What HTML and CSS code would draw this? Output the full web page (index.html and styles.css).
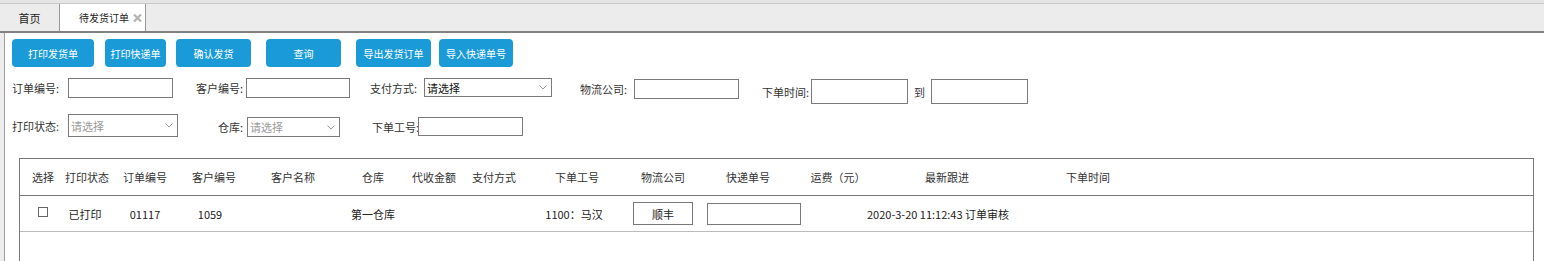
FILE: index.html
```html
<!DOCTYPE html>
<html lang="zh-CN">
<head>
    <meta charset="UTF-8">
    <meta name="viewport" content="width=device-width, initial-scale=1.0">
    <title>待发货订单</title>
    <link rel="stylesheet" href="styles.css">
</head>
<body>
    <div class="top-strip"></div>
    <div class="tabs">
        <div class="tab">首页</div>
        <div class="tab active">
            待发货订单
            <svg class="tab-close" width="9" height="8" viewBox="0 0 9 8">
                <path d="M1 0.5 L8 7.5 M8 0.5 L1 7.5" stroke="#b4b4b4" stroke-width="2.2" fill="none"/>
            </svg>
        </div>
    </div>

    <div class="main">
        <div class="toolbar">
            <button class="btn btn-wide">打印发货单</button>
            <button class="btn btn-narrow">打印快递单</button>
            <button class="btn">确认发货</button>
            <button class="btn">查询</button>
            <button class="btn btn-export">导出发货订单</button>
            <button class="btn btn-import">导入快递单号</button>
        </div>

        <div class="filter-row row-one">
            <div class="field f-order">
                <label class="label">订单编号:</label>
                <input class="input">
            </div>
            <div class="field f-customer">
                <label class="label">客户编号:</label>
                <input class="input">
            </div>
            <div class="field f-pay">
                <label class="label">支付方式:</label>
                <div class="select">
                    <span>请选择</span>
                    <svg width="8" height="5" viewBox="0 0 8 5"><path d="M0.5 0.5 L4 4 L7.5 0.5" stroke="#9a9a9a" fill="none"/></svg>
                </div>
            </div>
            <div class="field f-logistics">
                <label class="label">物流公司:</label>
                <input class="input">
            </div>
            <div class="field f-time">
                <label class="label">下单时间:</label>
                <input class="input input-date">
                <label class="label label-to">到</label>
                <input class="input input-date">
            </div>
        </div>

        <div class="filter-row row-two">
            <div class="field f-print">
                <label class="label">打印状态:</label>
                <div class="select muted">
                    <span>请选择</span>
                    <svg width="8" height="5" viewBox="0 0 8 5"><path d="M0.5 0.5 L4 4 L7.5 0.5" stroke="#9a9a9a" fill="none"/></svg>
                </div>
            </div>
            <div class="field f-store">
                <label class="label">仓库:</label>
                <div class="select muted">
                    <span>请选择</span>
                    <svg width="8" height="5" viewBox="0 0 8 5"><path d="M0.5 0.5 L4 4 L7.5 0.5" stroke="#9a9a9a" fill="none"/></svg>
                </div>
            </div>
            <div class="field f-staff">
                <label class="label">下单工号:</label>
                <input class="input">
            </div>
        </div>

        <div class="grid">
            <div class="grid-row grid-head">
                <div class="cell">选择</div>
                <div class="cell">打印状态</div>
                <div class="cell">订单编号</div>
                <div class="cell">客户编号</div>
                <div class="cell">客户名称</div>
                <div class="cell">仓库</div>
                <div class="cell">代收金额</div>
                <div class="cell">支付方式</div>
                <div class="cell">下单工号</div>
                <div class="cell">物流公司</div>
                <div class="cell">快递单号</div>
                <div class="cell">运费（元）</div>
                <div class="cell">最新跟进</div>
                <div class="cell">下单时间</div>
                <div class="cell"></div>
            </div>
            <div class="grid-row grid-item">
                <div class="cell"><span class="checkbox"></span></div>
                <div class="cell cell-status">已打印</div>
                <div class="cell">01117</div>
                <div class="cell cell-cust">1059</div>
                <div class="cell"></div>
                <div class="cell">第一仓库</div>
                <div class="cell"></div>
                <div class="cell"></div>
                <div class="cell cell-staff">1100：马汉</div>
                <div class="cell"><span class="carrier">顺丰</span></div>
                <div class="cell cell-express"><input class="input express-no"></div>
                <div class="cell"></div>
                <div class="cell cell-follow">2020-3-20 11:12:43 订单审核</div>
                <div class="cell"></div>
                <div class="cell"></div>
            </div>
        </div>
    </div>
</body>
</html>
```

FILE: styles.css
```css
body {
    margin: 0;
    height: 261px;
    overflow: hidden;
    font-family: "Noto Sans CJK SC", "Noto Sans", sans-serif;
    font-size: 11px;
    color: #333;
    background: #ececec;
}
.top-strip {
    height: 3px;
    background: #e4e4e4;
    border-bottom: 1px solid #c8c8c8;
}
.tabs {
    display: flex;
    height: 27px;
    background: #ececec;
    border-bottom: 2px solid #808080;
}
.tab {
    width: 59px;
    display: flex;
    align-items: center;
    justify-content: center;
    font-size: 11px;
    color: #222;
}
.tab.active {
    box-sizing: border-box;
    width: 87px;
    justify-content: flex-start;
    padding-left: 19px;
    background: #fff;
    border-left: 1px solid #999;
    border-right: 1px solid #999;
    font-size: 10px;
}
.tab-close {
    margin-left: 4px;
}
.main {
    margin-left: 4px;
    border-left: 1px solid #a0a0a0;
    background: #fff;
    height: 228px;
    overflow: hidden;
}
.toolbar {
    display: flex;
    margin: 6px 0 0 7px;
}
.btn {
    width: 75px;
    height: 28px;
    margin-right: 15px;
    padding: 0;
    border: none;
    border-radius: 4px;
    background: #1a9bd7;
    color: #fff;
    font-family: inherit;
    font-size: 10px;
    cursor: pointer;
}
.btn-wide {
    width: 82px;
    margin-right: 11px;
}
.btn-narrow {
    width: 61px;
    margin-right: 10px;
}
.btn-export {
    margin-right: 8px;
}
.btn-import {
    width: 74px;
}
.filter-row {
    display: flex;
    margin-left: 7px;
}
.row-one {
    margin-top: 11px;
    align-items: flex-start;
}
.row-two {
    margin-top: 10px;
    align-items: flex-end;
}
.field {
    display: flex;
    align-items: center;
}
.label {
    white-space: nowrap;
    color: #333;
}
.input {
    box-sizing: border-box;
    height: 20px;
    padding: 0 2px;
    border: 1px solid #7a7a7a;
    border-radius: 0;
    background: #fff;
    font-family: inherit;
    font-size: 11px;
}
.select {
    box-sizing: border-box;
    display: flex;
    align-items: center;
    justify-content: space-between;
    height: 19px;
    padding: 0 4px 0 2px;
    border: 1px solid #7a7a7a;
    background: #fff;
    color: #111;
}
.select.muted {
    color: #9a9a9a;
}

/* row one */
.f-order .label { width: 56px; }
.f-order .input { width: 105px; }
.f-order { margin-right: 23px; }
.f-customer .label { width: 50px; }
.f-customer .input { width: 104px; }
.f-customer { margin-right: 20px; }
.f-pay .label { width: 54px; }
.f-pay .select { width: 128px; }
.f-pay { margin-right: 28px; }
.f-logistics { margin-top: 1px; margin-right: 23px; }
.f-logistics .label { width: 54px; }
.f-logistics .input { width: 105px; }
.f-time { margin-top: 1px; }
.f-time .label { width: 49px; }
.f-time .label-to { width: 17px; margin-left: 6px; }
.input-date { width: 97px; height: 25px; }

/* row two */
.f-print .label { width: 56px; }
.f-print .select { width: 110px; height: 23px; }
.f-print { margin-right: 40px; }
.f-store .label { width: 29px; }
.f-store .select { width: 93px; height: 20px; }
.f-store { margin-right: 32px; }
.f-staff { margin-bottom: 1px; }
.f-staff .label { width: 46px; }
.f-staff .input { width: 105px; height: 19px; }

/* order grid */
.grid {
    margin: 21px 10px 0 14px;
    height: 200px;
    border: 1px solid #777;
}
.grid-row {
    display: grid;
    grid-template-columns: 46px 42px 74px 64px 94px 66px 56px 64px 102px 70px 100px 80px 138px 144px 1fr;
}
.grid-head {
    height: 36px;
    border-bottom: 1px solid #777;
    color: #333;
}
.grid-item {
    height: 35px;
    border-bottom: 1px solid #bbb;
    color: #222;
}
.cell {
    display: flex;
    align-items: center;
    justify-content: center;
    white-space: nowrap;
}
.cell-status { padding-right: 4px; }
.cell-cust { padding-right: 8px; }
.cell-staff { padding-right: 6px; }
.cell-express { padding-left: 12px; }
.cell-follow { padding-right: 18px; }
.checkbox {
    box-sizing: border-box;
    width: 10px;
    height: 10px;
    margin-bottom: 3px;
    border: 1px solid #666;
    background: #fff;
}
.carrier {
    box-sizing: border-box;
    display: flex;
    align-items: center;
    justify-content: center;
    width: 60px;
    height: 23px;
    border: 1px solid #777;
}
.express-no {
    width: 94px;
    height: 22px;
}
```
